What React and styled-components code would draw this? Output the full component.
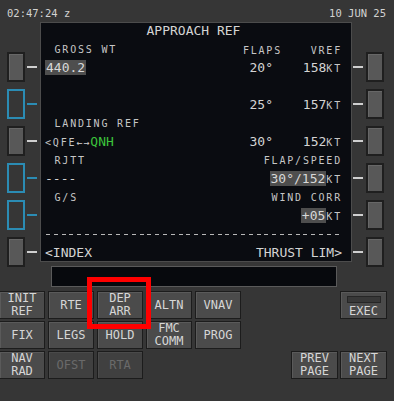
import React from "react";
import styled, { createGlobalStyle } from "styled-components";

const MONO = `"DejaVu Sans Mono", "Liberation Mono", monospace`;

const GlobalStyle = createGlobalStyle`
  html, body {
    margin: 0;
    padding: 0;
    background: #363636;
  }
  body {
    font-family: ${MONO};
    overflow: hidden;
  }
`;

const leftLsks = [false, true, false, true, true, false];
const rightLsks = [false, false, false, false, false, false];

const modeKeys = [
  { label: "INIT\nREF" },
  { label: "RTE" },
  { label: "DEP\nARR" },
  { label: "ALTN" },
  { label: "VNAV" },
  { label: "FIX" },
  { label: "LEGS" },
  { label: "HOLD" },
  { label: "FMC\nCOMM" },
  { label: "PROG" },
  { label: "NAV\nRAD" },
  { label: "OFST", off: true },
  { label: "RTA", off: true },
];

function App() {
  return (
    <Panel>
      <GlobalStyle />
      <TopBar>
        <span>02:47:24 z</span>
        <span>10 JUN 25</span>
      </TopBar>

      <Middle>
        <LskColumn>
          {leftLsks.map((blue, i) => (
            <LskRow key={i}>
              <LskButton $blue={blue} />
              <Dash $blue={blue} />
            </LskRow>
          ))}
        </LskColumn>

        <Center>
          <Screen>
            <Lines>
              <Line $center>
                <Big>APPROACH REF</Big>
              </Line>
              <Line>
                <Label>GROSS WT</Label>
                <Right>
                  <Mid>
                    <Small>FLAPS</Small>
                  </Mid>
                  <Col>
                    <Small>VREF</Small>
                  </Col>
                </Right>
              </Line>
              <Line>
                <Field>440.2</Field>
                <Right>
                  <Mid $value>20°</Mid>
                  <Col>
                    158<Small>KT</Small>
                  </Col>
                </Right>
              </Line>
              <Line />
              <Line>
                <span />
                <Right>
                  <Mid $value>25°</Mid>
                  <Col>
                    157<Small>KT</Small>
                  </Col>
                </Right>
              </Line>
              <Line>
                <Label>LANDING REF</Label>
              </Line>
              <Line>
                <span>
                  <Small>{"<QFE"}</Small>
                  <Arrows>←→</Arrows>
                  <Green>QNH</Green>
                </span>
                <Right>
                  <Mid $value>30°</Mid>
                  <Col>
                    152<Small>KT</Small>
                  </Col>
                </Right>
              </Line>
              <Line>
                <Label>RJTT</Label>
                <Small>FLAP/SPEED</Small>
              </Line>
              <Line>
                <Big>----</Big>
                <span>
                  <Field>30°/152</Field>
                  <Small>KT</Small>
                </span>
              </Line>
              <Line>
                <Label>G/S</Label>
                <Small>WIND CORR</Small>
              </Line>
              <Line>
                <span />
                <span>
                  <Field>+05</Field>
                  <Small>KT</Small>
                </span>
              </Line>
              <Line>
                <Rule />
              </Line>
              <Line>
                <Big>{"<INDEX"}</Big>
                <Big>{"THRUST LIM>"}</Big>
              </Line>
            </Lines>
          </Screen>
          <Scratchpad />
        </Center>

        <LskColumn $right>
          {rightLsks.map((blue, i) => (
            <LskRow key={i} $right>
              <Dash $blue={blue} />
              <LskButton $blue={blue} />
            </LskRow>
          ))}
        </LskColumn>
      </Middle>

      <Keypad>
        <ModeKeys>
          {modeKeys.map((k) => (
            <Key key={k.label} $off={k.off}>
              {k.label}
            </Key>
          ))}
        </ModeKeys>
        <PageKeys>
          <Key $col={2} $exec>
            <ExecLight />
            EXEC
          </Key>
          <Key $col={1} $row={3}>
            {"PREV\nPAGE"}
          </Key>
          <Key $col={2} $row={3}>
            {"NEXT\nPAGE"}
          </Key>
        </PageKeys>
      </Keypad>

      <Highlight />
    </Panel>
  );
}

const Panel = styled.div`
  position: relative;
  width: 394px;
  height: 401px;
  background: #363636;
  display: flex;
  flex-direction: column;
  font-family: ${MONO};
`;

const TopBar = styled.div`
  height: 22px;
  box-sizing: border-box;
  padding: 4px 8px 0 7px;
  display: flex;
  justify-content: space-between;
  align-items: center;
  font-size: 10.5px;
  color: #d2d2d2;
`;

const Middle = styled.div`
  display: flex;
  align-items: flex-start;
`;

const LskColumn = styled.div`
  width: ${(p) => (p.$right ? 42 : 40)}px;
  box-sizing: border-box;
  padding: 30px 0 0 ${(p) => (p.$right ? 1 : 7)}px;
  display: flex;
  flex-direction: column;
  gap: 7px;
`;

const LskRow = styled.div`
  height: 30px;
  display: flex;
  align-items: center;
  gap: ${(p) => (p.$right ? 3 : 2)}px;
`;

const LskButton = styled.div`
  width: 18px;
  height: 30px;
  box-sizing: border-box;
  border: ${(p) => (p.$blue ? "2px solid #2b8cb4" : "2px solid #1f1f1f")};
  background: ${(p) => (p.$blue ? "#363636" : "#585858")};
  box-shadow: ${(p) => (p.$blue ? "none" : "inset 1px 1px 0 #676767")};
`;

const Dash = styled.div`
  width: 10px;
  height: 2px;
  background: ${(p) => (p.$blue ? "#2b8cb4" : "#d0d0d0")};
`;

const Center = styled.div`
  width: 312px;
  display: flex;
  flex-direction: column;
`;

const Screen = styled.div`
  height: 240px;
  box-sizing: border-box;
  border: 1px solid #4c4c4c;
  background: #0a0c11;
  padding: 0 9px 0 4px;
  color: #d4d4d4;
  font-size: 13px;
`;

const Lines = styled.div`
  margin-top: -1.75px;
  display: flex;
  flex-direction: column;
`;

const Line = styled.div`
  height: 18.5px;
  display: flex;
  align-items: center;
  justify-content: ${(p) => (p.$center ? "center" : "space-between")};
  white-space: pre;
`;

const Big = styled.span`
  font-size: 13px;
  color: #d4d4d4;
`;

const Small = styled.span`
  font-size: 10px;
  letter-spacing: 1.8px;
  color: #c6c6c6;
`;

const Label = styled(Small)`
  padding-left: 9.5px;
`;

const Arrows = styled.span`
  font-size: 10px;
  letter-spacing: 1px;
  color: #d4d4d4;
`;

const Green = styled.span`
  font-size: 13px;
  color: #3cc43c;
`;

const Field = styled.span`
  display: inline-block;
  line-height: 15px;
  padding: 0 1px;
  background: #4e4e4e;
  color: #d8d8d8;
`;

const Right = styled.span`
  display: flex;
  align-items: center;
`;

const Mid = styled.span`
  padding-right: ${(p) => (p.$value ? "9px" : "0")};
`;

const Col = styled.span`
  width: 60px;
  text-align: right;
`;

const Rule = styled.div`
  flex: 1;
  height: 1px;
  margin-left: 1px;
  background: repeating-linear-gradient(
    90deg,
    #b8b8b8 0 4px,
    transparent 4px 7.8px
  );
`;

const Scratchpad = styled.div`
  width: 286px;
  height: 21px;
  margin: 4px 0 0 11px;
  box-sizing: border-box;
  border: 1px solid #5a5a5a;
  background: #07090d;
`;

const Keypad = styled.div`
  margin-top: 4px;
  display: flex;
  align-items: flex-start;
`;

const ModeKeys = styled.div`
  margin-left: -1px;
  display: grid;
  grid-template-columns: repeat(5, 46px);
  grid-auto-rows: 28px;
  column-gap: 3px;
  row-gap: 2px;
`;

const PageKeys = styled.div`
  margin-left: auto;
  margin-right: 7px;
  display: grid;
  grid-template-columns: repeat(2, 47px);
  grid-template-rows: repeat(3, 28px);
  column-gap: 2px;
  row-gap: 2px;
`;

const Key = styled.div`
  grid-column: ${(p) => p.$col || "auto"};
  grid-row: ${(p) => p.$row || "auto"};
  box-sizing: border-box;
  border: 1px solid #1c1c1c;
  background: ${(p) => (p.$off ? "#404040" : "#4b4b4b")};
  box-shadow: inset 1px 1px 0 ${(p) => (p.$off ? "#4a4a4a" : "#5a5a5a")};
  color: ${(p) => (p.$off ? "#6a6a6a" : "#d6d6d6")};
  font-size: 12px;
  line-height: 13px;
  white-space: pre-line;
  text-align: center;
  display: flex;
  flex-direction: column;
  align-items: center;
  justify-content: ${(p) => (p.$exec ? "flex-start" : "center")};
  padding-top: ${(p) => (p.$exec ? "4px" : "0")};
  gap: 2px;
`;

const ExecLight = styled.div`
  width: 34px;
  height: 7px;
  box-sizing: border-box;
  border: 1px solid #262626;
  background: #383838;
`;

const Highlight = styled.div`
  position: absolute;
  left: 87px;
  top: 277px;
  width: 64px;
  height: 52px;
  box-sizing: border-box;
  border: 5px solid #ff0000;
  pointer-events: none;
`;

export default App;
